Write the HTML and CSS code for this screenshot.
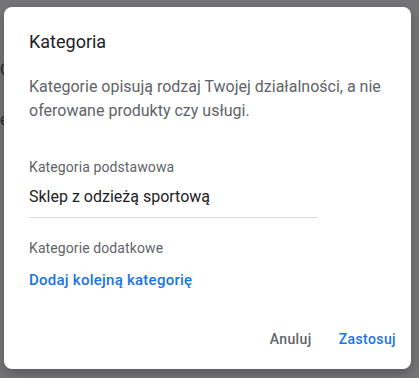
FILE: index.html
```html
<!DOCTYPE html>
<html lang="pl">
<head>
<meta charset="utf-8">
<link rel="stylesheet" href="styles.css">
</head>
<body>
<div class="page">
  <div class="bg-row"><span class="bg-txt">C</span></div>
  <div class="bg-row"><span class="bg-txt">e</span></div>
</div>
<div class="scrim"></div>
<div class="dialog">
  <h1 class="title">Kategoria</h1>
  <p class="desc">Kategorie opisują rodzaj Twojej działalności, a nie oferowane produkty czy usługi.</p>
  <div class="field">
    <div class="label">Kategoria podstawowa</div>
    <div class="input">Sklep z odzieżą sportową</div>
  </div>
  <div class="field extra">
    <div class="label">Kategorie dodatkowe</div>
    <a class="add">Dodaj kolejną kategorię</a>
  </div>
  <div class="actions">
    <button class="btn cancel">Anuluj</button>
    <button class="btn apply">Zastosuj</button>
  </div>
</div>
</body>
</html>
```

FILE: styles.css
```css
html, body {
  margin: 0;
  height: 100%;
}
body {
  background: #ffffff;
  font-family: Roboto, "Noto Sans", sans-serif;
  position: relative;
  overflow: hidden;
}
.page {
  padding: 60px 0 0 0;
  color: #333;
}
.bg-row {
  height: 50px;
}
.scrim {
  position: absolute;
  inset: 0;
  background: rgba(32, 33, 36, 0.62);
}
.dialog {
  position: absolute;
  left: 4px;
  top: 7px;
  width: 407px;
  height: 362px;
  box-sizing: border-box;
  background: #fff;
  border-radius: 8px;
  padding: 23px 24px 0 25px;
  display: flex;
  flex-direction: column;
  box-shadow: 0 4px 12px rgba(0,0,0,0.25);
}
.title {
  margin: 0;
  font-size: 18px;
  font-weight: 400;
  line-height: 24px;
  color: #202124;
}
.desc {
  margin: 21px 0 0 0;
  font-size: 16px;
  line-height: 24px;
  color: #5f6368;
}
.field {
  margin-top: 34px;
}
.label {
  font-size: 14px;
  line-height: 20px;
  color: #5f6368;
  letter-spacing: 0.1px;
}
.input {
  width: 289px;
  margin-top: 8px;
  font-size: 16px;
  line-height: 24px;
  color: #202124;
  padding-bottom: 8px;
  border-bottom: 1px solid #dadce0;
}
.extra {
  margin-top: 20px;
}
.add {
  display: block;
  margin-top: 12px;
  font-size: 15px;
  font-weight: 500;
  line-height: 20px;
  letter-spacing: 0.25px;
  color: #1a73e8;
}
.actions {
  margin-top: auto;
  margin-bottom: 12px;
  display: flex;
  justify-content: flex-end;
  gap: 11px;
  margin-right: -17px;
}
.btn {
  font-family: Roboto, sans-serif;
  background: none;
  border: 0;
  padding: 8px 8px;
  font-size: 14px;
  font-weight: 500;
  letter-spacing: 0.4px;
  line-height: 20px;
}
.cancel { color: #5f6368; }
.apply { color: #1a73e8; }
```
